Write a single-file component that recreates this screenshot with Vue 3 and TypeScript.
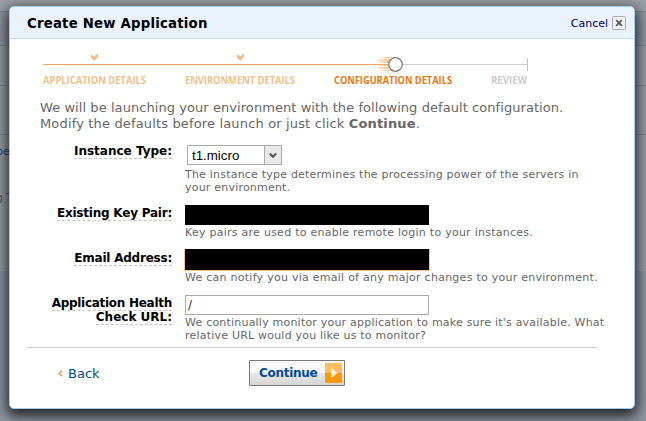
<script setup lang="ts">
import { ref } from 'vue'

interface Step { label: string; x: number; width: number; state: 'done' | 'current' | 'todo'; tick?: number }

const steps: Step[] = [
  { label: 'APPLICATION DETAILS', x: 3, width: 103, state: 'done', tick: 55 },
  { label: 'ENVIRONMENT DETAILS', x: 145, width: 110, state: 'done', tick: 201 },
  { label: 'CONFIGURATION DETAILS', x: 294, width: 118, state: 'current' },
  { label: 'REVIEW', x: 451, width: 36, state: 'todo' },
]
const healthUrl = ref('/')
</script>

<template>
  <div class="page">
    <div class="band b1"></div>
    <div class="band b2"></div>
    <div class="band b3"></div>
    <div class="band b4"></div>
    <div class="band b5"><span class="link">pe</span><span>g T</span></div>
    <div class="band b6"></div>

    <section class="dialog">
      <header class="head">
        <h1>Create New Application</h1>
        <a class="cancel">Cancel
          <svg width="14" height="14" viewBox="0 0 14 14">
            <rect x=".5" y=".5" width="13" height="13" rx="1" fill="#f1f1f1" stroke="#aaa" />
            <path d="M4.2 4.2 9.8 9.8M9.8 4.2 4.2 9.8" stroke="#555" stroke-width="1.7" />
          </svg>
        </a>
      </header>

      <svg class="steps" width="500" height="48" viewBox="0 0 500 48">
        <defs>
          <linearGradient id="trail" gradientUnits="userSpaceOnUse" x1="332" x2="350" y1="0" y2="0"><stop offset="0" stop-color="#f2b36f" stop-opacity=".1" /><stop offset="1" stop-color="#f0b070" stop-opacity=".75" /></linearGradient>
        </defs>
        <rect x="3" y="15" width="345" height="1" fill="#eba85f" />
        <rect x="362" y="15" width="125" height="1" fill="#ccc" />
        <rect x="487" y="9" width="1" height="13" fill="#c4c4c4" />
        <g fill="url(#trail)">
          <rect x="341" y="8" width="11" height="1" /><rect x="336" y="10" width="14" height="2" />
          <rect x="339" y="12" width="10" height="2" /><rect x="334" y="15" width="15" height="2" />
          <rect x="338" y="18" width="11" height="2" /><rect x="341" y="21" width="11" height="1" />
        </g>
        <circle cx="355.5" cy="15.5" r="6.8" fill="#fff" stroke="#7d7d7d" stroke-width="1.3" />
        <template v-for="s in steps" :key="s.label">
          <path v-if="s.tick" :transform="`translate(${s.tick - 4} 5)`" d="M0 1H1.5L3 2.8 6 0H7V2.5L3.8 6.5H3L0 3.8Z" fill="#f1b984" />
          <text :x="s.x" y="35" :textLength="s.width" lengthAdjust="spacingAndGlyphs" :class="s.state">{{ s.label }}</text>
        </template>
      </svg>

      <p class="intro">We will be launching your environment with the following default configuration.<br><span>Modify the defaults before launch or just click <b>Continue</b>.</span></p>

      <div class="form">
        <div class="row r1">
          <div class="label"><span>Instance Type:</span></div>
          <div class="field">
            <div class="select"><span>t1.micro</span>
              <i><svg width="8" height="7" viewBox="0 0 8 7"><path d="M.8 1.5 4 4.8 7.2 1.5" fill="none" stroke="#555" stroke-width="2" /></svg></i>
            </div>
            <p class="hint">The instance type determines the processing power of the servers in<br>your environment.</p>
          </div>
        </div>
        <div class="row r2">
          <div class="label tight"><span>Existing Key Pair:</span></div>
          <div class="field"><div class="mask"></div><p class="hint wide">Key pairs are used to enable remote login to your instances.</p></div>
        </div>
        <div class="row r3">
          <div class="label tight"><span>Email Address:</span></div>
          <div class="field"><div class="mask focus"></div><p class="hint wide">We can notify you via email of any major changes to your environment.</p></div>
        </div>
        <div class="row r4">
          <div class="label"><span class="tighter">Application Health</span><br><span>Check URL:</span></div>
          <div class="field"><input v-model="healthUrl" type="text"><p class="hint">We continually monitor your application to make sure it's available. What<br>relative URL would you like us to monitor?</p></div>
        </div>
      </div>

      <footer class="foot">
        <a class="back"><svg width="5" height="7" viewBox="0 0 5 7"><path d="M4 .8 1.2 3.5 4 6.2" fill="none" stroke="#e78a35" stroke-width="1.2" /></svg>Back</a>
        <button class="continue" type="button"><span>Continue</span>
          <svg width="17" height="20" viewBox="0 0 17 20"><rect width="17" height="20" rx="1" fill="#ff9900" /><rect width="17" height="10" rx="1" fill="#ffbd61" /><path d="M6 4.5V15.5L12.5 10Z" fill="#fff4e4" /></svg>
        </button>
      </footer>
    </section>
  </div>
</template>

<style>
body { margin: 0; overflow: hidden; }
</style>

<style scoped>
* { box-sizing: border-box; }
p, h1 { margin: 0; }
.page { position: relative; width: 646px; height: 421px; overflow: hidden; background: #969ba3; font-family: "DejaVu Sans", Verdana, sans-serif; color: #666; }
.band { border-bottom: 1px solid #7f848b; background: #9a9fa5; }
.b1 { height: 12px; }
.b2 { height: 34px; background: #8f97a1; }
.b3 { height: 40px; }
.b4 { height: 49px; }
.b5 { height: 136px; padding-top: 9px; border: 0; font-size: 11px; line-height: 16px; color: #4b5058; white-space: nowrap; }
.b5 span { display: block; height: 46px; margin-left: -4px; }
.b5 .link { color: #25446d; }
.b6 { height: 150px; background: #8f97a1; border: 0; }
.dialog { position: absolute; left: 9px; top: 6px; width: 626px; height: 403px; background: #fff; border: 1px solid #a3cdeb; border-radius: 5px; box-shadow: 0 5px 14px 2px rgba(0,0,0,.8); }
.head { display: flex; justify-content: space-between; height: 32px; padding: 0 8px 0 17px; background: #eaf2fe; border-bottom: 1px solid #c5e0f2; border-radius: 4px 4px 0 0; }
h1 { font-size: 13.3px; line-height: 34px; letter-spacing: .2px; color: #000; white-space: nowrap; }
.cancel { display: flex; align-items: center; gap: 4px; font-size: 11px; color: #000066; height: 32px; }
.steps { display: block; margin: 10px 0 0 30px; }
.steps text { font: bold 11.3px "Open Sans", sans-serif; }
.done { fill: #f2bf8c; }
.current { fill: #e47911; }
.todo { fill: #ccc; }
.intro { margin: 3px 0 0 30px; font-size: 13px; line-height: 16px; letter-spacing: .065px; white-space: nowrap; }
.intro span { letter-spacing: .155px; }
.row { display: grid; grid-template-columns: 162px 1fr; column-gap: 13px; }
.r1 { height: 63px; margin-top: 10px; }
.r2 { height: 44px; }
.r3 { height: 46px; }
.r4 { height: 52px; }
.label { padding-top: 2px; text-align: right; font-size: 12px; line-height: 14px; font-weight: bold; color: #000; white-space: nowrap; }
.r2 .label, .r4 .label { padding-top: 1px; }
.label span { border-bottom: 1px dashed #c4c4c4; }
.tight { letter-spacing: -.22px; }
.tighter { letter-spacing: -.28px; }
.hint { font-size: 11px; line-height: 13px; letter-spacing: .21px; white-space: nowrap; }
.wide { letter-spacing: .26px; }
.select { display: flex; justify-content: space-between; width: 95px; height: 20px; margin: 3px 0 3px 2px; border: 1px solid #aaa; padding-left: 4px; font: 13.3px/19px "Liberation Sans", Arial, sans-serif; color: #000; }
.select i { display: grid; place-items: center; width: 17px; background: #e8e8e8; border: 1px solid #aaa; border-width: 0 0 0 1px; }
.mask { width: 244px; height: 20px; margin-bottom: 1px; background: #000; }
.mask.focus { height: 21px; box-shadow: 0 0 0 1px #f5c888; clip-path: inset(0 -1px -1px -1px); }
input { display: block; width: 244px; height: 20px; margin-bottom: 1px; padding: 0 2px; border: 1px solid #aaa; font: 12px "DejaVu Sans", sans-serif; color: #333; }
.foot { display: flex; width: 570px; height: 60px; margin-left: 17px; border-top: 1px solid #ccc; padding: 12px 0 0 30px; }
.back { display: flex; align-items: center; gap: 5px; width: 192px; height: 26px; padding-left: 1px; font-size: 13px; color: #004b91; }
.continue { display: flex; align-items: center; justify-content: space-between; width: 96px; height: 26px; padding: 0 2px 0 9px; border: 1px solid #777; border-radius: 1px; background: linear-gradient(#f8f8f8 0 48%, #e9e9e9 50%, #d5d5d5); font: bold 12px "DejaVu Sans", sans-serif; letter-spacing: -.3px; color: #004b91; }
</style>
